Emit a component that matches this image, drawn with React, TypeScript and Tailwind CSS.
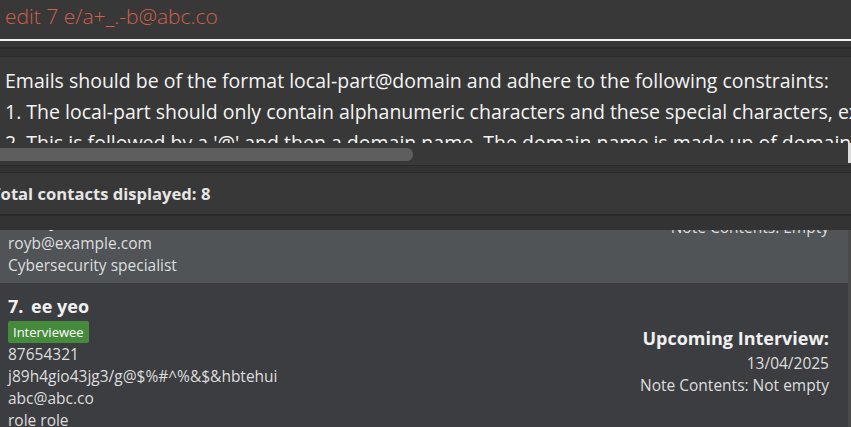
import React from "react";

const F = { fontFamily: '"Open Sans", "Noto Sans", sans-serif' };

export default function App() {
  return (
    <div className="w-[851px] h-[427px] overflow-hidden bg-[#383838] flex flex-col" style={F}>
      {/* command box */}
      <div className="h-[39px] bg-[#383838] flex items-center px-[5px] shrink-0">
        <span className="text-[21px] font-light text-[#d0604a] leading-none -mt-[6px]">edit 7 e/a+_.-b@abc.co</span>
      </div>
      <div className="h-[2px] bg-[#f2f2f2] shrink-0" />
      <div className="h-[6px] bg-[#383838] shrink-0" />
      <div className="h-[2px] bg-[#2b2b2b] shrink-0" />
      <div className="h-[7px] bg-[#323232] shrink-0" />
      <div className="h-[1px] bg-[#2a2a2a] shrink-0" />
      {/* result display */}
      <div className="relative h-[108px] bg-[#383838] shrink-0">
        <div className="h-[86px] overflow-hidden pl-[5px] pt-[8px] text-[19.5px] leading-[31px] text-[#f4f4f4] whitespace-nowrap">
          <div>Emails should be of the format local-part@domain and adhere to the following constraints:</div>
          <div>1. The local-part should only contain alphanumeric characters and these special characters, excluding the parentheses, (+_.-).</div>
          <div>2. This is followed by a '@' and then a domain name. The domain name is made up of domain labels separated by periods.</div>
        </div>
        <div className="h-[13px] mt-[5px] w-[413px] bg-[#5e5e5e] rounded-r-[6px]" />
        <div className="absolute right-0 top-[86px] w-[3px] h-[20px] bg-[#dcdcdc]" />
      </div>
      <div className="h-[1px] bg-[#2a2a2a] shrink-0" />
      <div className="h-[6px] bg-[#323232] shrink-0" />
      <div className="h-[1px] bg-[#2a2a2a] shrink-0" />
      {/* status */}
      <div className="h-[41px] bg-[#383838] flex items-center shrink-0 overflow-hidden">
        <span className="text-[16.6px] font-bold text-[#e6e6e6] -ml-[9px] mt-[2px] whitespace-nowrap">Total contacts displayed: 8</span>
      </div>
      <div className="h-[2px] bg-[#2a2a2a] shrink-0" />
      <div className="h-[14px] bg-[#333333] shrink-0" />
      {/* list */}
      <div className="flex-1 flex bg-[#3c3d40] overflow-hidden">
        <div className="flex-1 flex flex-col">
          {/* card 6 (partially scrolled) */}
          <div className="h-[53px] bg-[#505457] overflow-hidden shrink-0">
            <div className="flex -mt-[20px] pl-[8px] pr-[19px]">
              <div className="flex-1 flex flex-col text-[15.5px] leading-[22px] text-[#dedede]">
                <div className="text-[17px] font-bold text-[#f0f0f0] leading-[22px]">6. Roy Balakrishnan</div>
                <div>royb@example.com</div>
                <div>Cybersecurity specialist</div>
              </div>
              <div className="flex flex-col items-end text-[15.5px] leading-[22px] text-[#dedede] pt-[6px]">
                <div>Note Contents: Empty</div>
              </div>
            </div>
          </div>
          {/* card 7 */}
          <div className="flex pl-[8px] pr-[19px] pt-[10px]">
            <div className="flex-1 flex flex-col text-[15.5px] leading-[22px] text-[#dedede]">
              <div className="text-[18px] font-bold text-[#f0f0f0] leading-[26px]">
                <span className="mr-[3px]">7.</span> ee yeo
              </div>
              <div className="mt-[2px] self-start bg-[#468a3c] text-white text-[13px] leading-[22px] px-[5px] rounded-[2px]">Interviewee</div>
              <div>87654321</div>
              <div>j89h4gio43jg3/g@$%#^%&amp;$&amp;hbtehui</div>
              <div>abc@abc.co</div>
              <div>role role</div>
            </div>
            <div className="flex flex-col items-end text-[15.5px] leading-[22px] text-[#dedede] pt-[31px]">
              <div className="text-[18px] font-bold text-[#f0f0f0] leading-[28px]">Upcoming Interview:</div>
              <div>13/04/2025</div>
              <div>Note Contents: Not empty</div>
            </div>
          </div>
        </div>
        <div className="w-[3px] bg-[#4a4a4a] shrink-0" />
      </div>
    </div>
  );
}
